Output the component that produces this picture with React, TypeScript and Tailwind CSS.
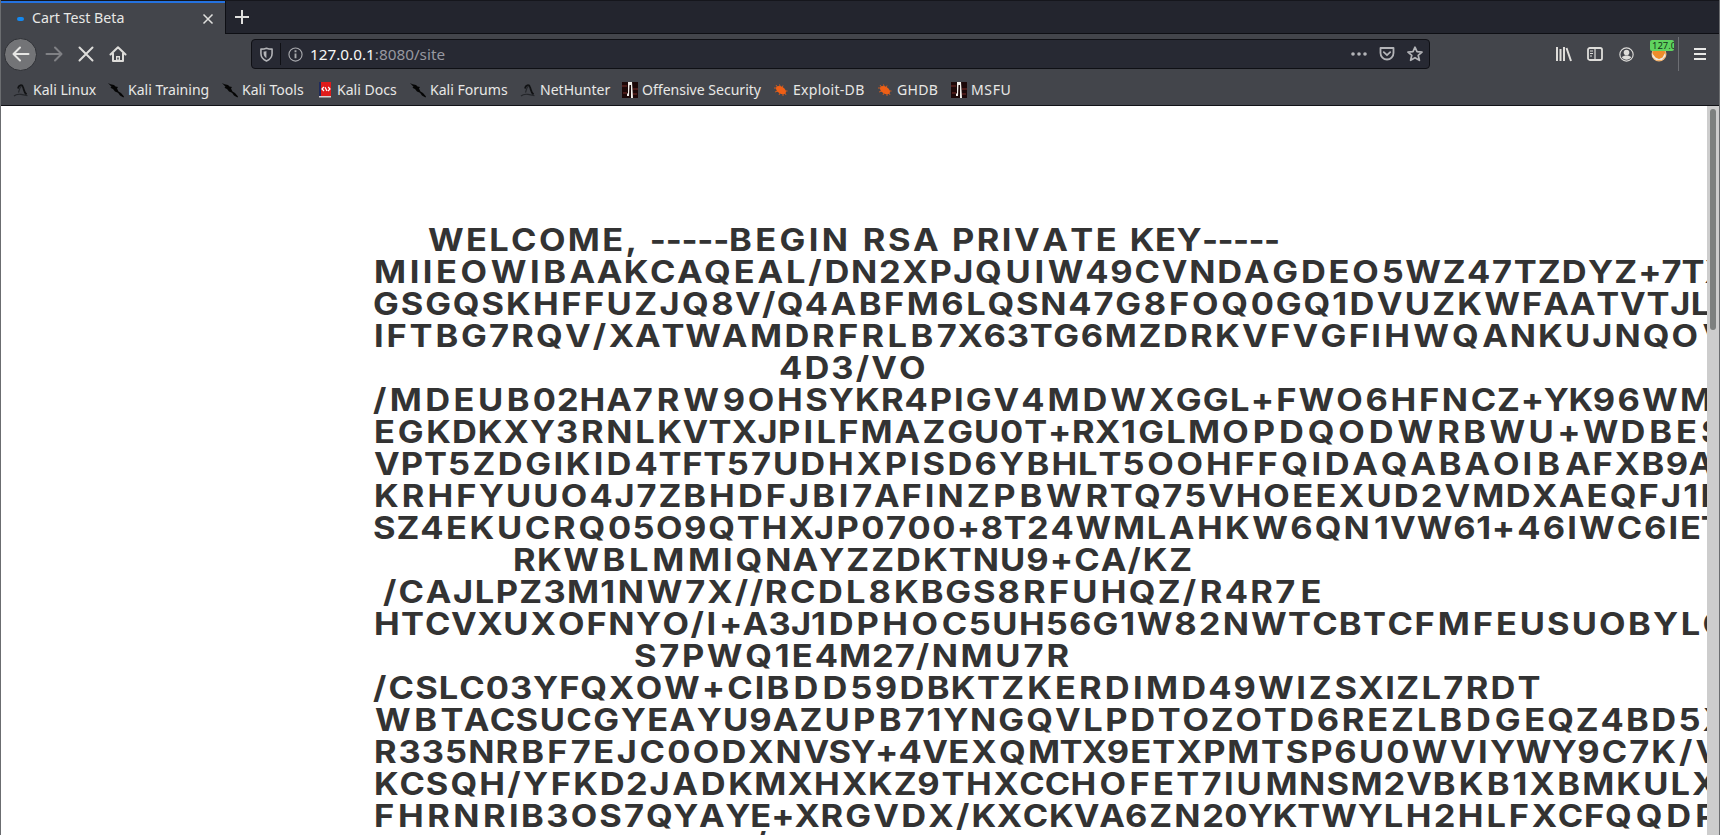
import React from "react";

type Run = [text: string, x: number];

const FACE = "700 31px Inter";
const STRETCH = 1.11;

// Each line: runs of glyphs with the x at which they begin, and the x at which the line stops.
const LINES: { runs: Run[]; end: number }[] = [
  { runs: [["WELCOME, ", 428], ["-----", 652], ["BEGIN ", 731.3], ["RSA ", 865], ["PRIVATE ", 954.3], ["KEY", 1132], ["-----", 1204.3]], end: 1279.5 },
  { runs: [["MIIEOWIB", 376.7], ["AAKCA", 570], ["QEAL/", 705.7], ["DN2XPJ", 827.3], ["QUI", 976.7], ["W49CVND", 1048.3], ["AGDEO", 1244.3], ["5WZ47", 1383.3], ["TZDYZ", 1515.3], ["+7T", 1641], ["X", 1705]], end: 1732 },
  { runs: [["GSGQS", 375], ["KHFFUZJQ", 509], ["8V/Q", 713.3], ["4ABFM6", 806.7], ["LQSN47", 969.3], ["G8FOQ", 1117.3], ["0GQ", 1252.7], ["1DVU", 1334.3], ["ZKW", 1434.3], ["FAATV", 1525.3], ["TJ", 1648.7], ["L", 1694]], end: 1714 },
  { runs: [["IFTB", 376.7], ["G7RQV", 462.7], ["/", 593.3], ["XATW", 609.3], ["AMD", 722.3], ["RFRLB", 814.7], ["7X63T", 938.3], ["G6MZ", 1055], ["DRKV", 1165.7], ["FVGF", 1272.7], ["IHWQ", 1374], ["ANK", 1482.7], ["UJNQ", 1567.7], ["O", 1673.3], ["V", 1703]], end: 1727 },
  { runs: [["4D3/VO", 781]], end: 928.5 },
  { runs: [["/", 373.3], ["MDEUB", 392.3], ["02HA", 534.3], ["7RW", 634.3], ["9OH", 724.3], ["SYKR", 806.7], ["4PIGV", 906], ["4MDW", 1022.7], ["XGGL", 1149.3], ["+FW", 1253.3], ["O6HFN", 1337.7], ["CZ", 1472.3], ["+YK", 1523.3], ["96W", 1594.3], ["M", 1682.7]], end: 1714 },
  { runs: [["EG", 376.7], ["KDKXY", 429], ["3RNL", 557.7], ["KVTXJ", 660], ["PI", 780.7], ["LFMAZ", 819.3], ["GU0T", 949], ["+RX", 1050.7], ["1GLM", 1122.7], ["OPDQ", 1224], ["ODW", 1340], ["RBWU", 1440], ["+W", 1560], ["DBE", 1623.3], ["S", 1702.7]], end: 1724 },
  { runs: [["VPT", 374.3], ["5ZDGI", 449.3], ["KID", 568.3], ["4TFT", 636], ["57U", 728.3], ["DHXPI", 802.7], ["S", 924], ["D6YB", 950], ["HLT", 1054], ["5OOHF", 1124], ["FQI", 1260], ["DAQ", 1327.3], ["ABAO", 1410.7], ["IB", 1525], ["AFXB", 1565.7], ["9", 1667.3], ["A", 1689]], end: 1715 },
  { runs: [["KRH", 376.7], ["FYUUO", 459], ["4J7Z", 591], ["BHDFJ", 686], ["BI", 815], ["7A", 854], ["FIN", 904.3], ["ZPBW", 968.3], ["RTQ", 1088.3], ["75VH", 1164], ["OEEX", 1265], ["UD2V", 1369.3], ["MDX", 1475], ["AEQFJ", 1559.3], ["1", 1685], ["E", 1703.3]], end: 1726 },
  { runs: [["SZ", 375], ["4EK", 422.3], ["UCRQ", 500], ["05O", 610], ["9QTH", 686], ["X", 790], ["JP", 816], ["0700", 863.3], ["+8T", 960], ["24WM", 1029], ["LAHK", 1150], ["W6Q", 1253.3], ["N", 1346.7], ["1V", 1376], ["W61", 1417.7], ["+46I", 1495], ["WC6I", 1580], ["E", 1683.3], ["T", 1703]], end: 1725 },
  { runs: [["RK", 516], ["WBLM", 564], ["MIQ", 691], ["NA", 768.3], ["YZZD", 820], ["KTNU", 926], ["9+CA", 1028.3], ["/KZ", 1128.3]], end: 1195 },
  { runs: [["/", 383.3], ["CAJL", 400], ["PZ3M", 498.3], ["1NW", 601.7], ["7X", 686.7], ["//", 735], ["RC", 767.3], ["DL8", 820.7], ["KBGS", 896.7], ["8RFU", 999], ["HQZ", 1103.3], ["/", 1183.3], ["R4", 1202.3], ["R", 1253], ["7", 1276.7], ["E", 1303.3]], end: 1323 },
  { runs: [["HT", 376.7], ["CVX", 426.7], ["UXO", 506], ["FNYO", 589.3], ["/I", 691], ["+A3", 721.7], ["J", 792.7], ["1D", 812.7], ["PHO", 859.3], ["C5U", 943.3], ["H56", 1021.7], ["G1W", 1094.3], ["82N", 1176], ["WTC", 1251.7], ["BTC", 1341.7], ["FMFE", 1417.3], ["USU", 1522.7], ["OBYL", 1600.7], ["C", 1704.3]], end: 1728 },
  { runs: [["S7", 636], ["PWQ", 685], ["1E", 776.7], ["4M2", 816.7], ["7", 896.7], ["/NM", 916.7], ["U7R", 998.3]], end: 1073 },
  { runs: [["/", 373.3], ["CSLC", 390], ["03YF", 487.3], ["QXO", 581.7], ["W", 664.3], ["+CI", 704.3], ["BD", 769], ["D", 825], ["59D", 851.7], ["BKT", 929.3], ["ZKER", 1002.7], ["DIM", 1107.3], ["D49", 1184], ["WIZ", 1258.3], ["SXI", 1336], ["ZL7", 1397.7], ["RDT", 1468.3]], end: 1543 },
  { runs: [["WB", 375], ["TAC", 441.7], ["SUCG", 516.7], ["YEA", 620.7], ["YU9A", 696.7], ["Z", 800.7], ["UPB", 826.7], ["71Y", 906], ["NGQ", 972.3], ["VLPD", 1055], ["TOZ", 1159], ["O", 1236.7], ["TD6", 1265], ["REZL", 1344], ["BDG", 1441.7], ["EQZ", 1526.7], ["4BD5", 1601.7], ["X", 1703]], end: 1728 },
  { runs: [["R", 376.7], ["335N", 400], ["RBF", 498.3], ["7EJ", 572.3], ["C0O", 641], ["DXN", 724.3], ["VSY", 804], ["+4V", 877.7], ["EXQ", 951], ["MTX", 1030.7], ["9ETX", 1108.3], ["PM", 1206], ["TSP", 1262.7], ["6U0", 1336], ["WVI", 1412.3], ["YWY", 1490.7], ["9C7", 1579], ["K/", 1654], ["V", 1696]], end: 1720 },
  { runs: [["KC", 376.7], ["SQH", 427.3], ["/YF", 507.7], ["KD2", 576], ["JAD", 651], ["KMX", 731], ["H", 816.7], ["XKZ", 842.3], ["9TH", 919], ["XCC", 994], ["HOF", 1073.3], ["ET7", 1155.7], ["I", 1226.7], ["U", 1239.3], ["MNS", 1268.3], ["M2V", 1353.3], ["BKB", 1435.7], ["1XB", 1514.3], ["MKU", 1585], ["L", 1673.3], ["X", 1692.7]], end: 1718 },
  { runs: [["FH", 376.7], ["RNR", 430], ["IB3", 511.7], ["OS7", 572.3], ["QYA", 647.7], ["YE+", 725.7], ["X", 795], ["RGV", 823.3], ["DX/", 904], ["KXC", 974.3], ["KVA", 1051.7], ["6ZN", 1126.7], ["20", 1204], ["YK", 1248.3], ["TWY", 1299], ["LH2", 1386.7], ["HLF", 1460.7], ["XCF", 1532.3], ["QQD", 1606.7], ["P", 1698]], end: 1722 },
];

const ctx = document.createElement("canvas").getContext("2d")!;

// Bearings and widths of the heading face, so each run's ink can begin at its x.
function bearing(ch: string) {
  ctx.font = FACE;
  return -ctx.measureText(ch).actualBoundingBoxLeft * STRETCH;
}
function natural(text: string) {
  ctx.font = FACE;
  return [...text].reduce((sum, ch) => sum + ctx.measureText(ch).width, 0);
}

function KeyLine({ runs, end }: { runs: Run[]; end: number }) {
  const starts = runs.map(([t, x]) => x - bearing(t[0]));
  return (
    <div
      className="flex h-8 origin-left scale-x-[1.11] whitespace-pre [font-kerning:none]"
      style={{ marginLeft: starts[0] - 1.4 }}
    >
      {runs.map(([text], i) => {
        const width = ((starts[i + 1] ?? end) - starts[i]) / STRETCH;
        const letterSpacing = (width - natural(text)) / text.length;
        return (
          <span key={i} className="shrink-0" style={{ width, letterSpacing }}>
            {text}
          </span>
        );
      })}
    </div>
  );
}

const Dragon = () => (
  <svg viewBox="0 0 16 16" className="h-4 w-4 shrink-0">
    <path d="M0 1l2.500 1.200L6 3l1.500 1.500L10 5l-1 1.500 1.500 3L13 11l3 3.500-.5 1L12 13.500l-2-2.800L7 9.500 5 7 2.500 5.800l1-1z" fill="#050505" />
  </svg>
);
const Hunter = () => (
  <svg viewBox="0 0 16 16" className="h-4 w-4 shrink-0">
    <path d="M5 6.500C5.500 3 9 2 10 5c1 2.500.8 5 3.500 7.500" fill="none" stroke="#111214" strokeWidth="1.800" />
    <path d="M8.500 4C6 6 6.500 8 5.500 10.500M1 14c2-1.800 4-2 7-1.600s4 .4 6.500 1.400" fill="none" stroke="#24262a" strokeWidth="1.200" />
  </svg>
);
const Docs = () => (
  <svg viewBox="0 0 16 16" className="h-4 w-4 shrink-0">
    <path d="M2 0h2v14H2z" fill="#202c5c" />
    <path d="M4 0h10v14H4z" fill="#e01b1b" />
    <path d="M2 14h12v1.500H2z" fill="#d8d0d0" />
    <path d="M6.800 5L5 7l2 2M11.200 5L13 7l-2 2M8 5.200l2 3.800" fill="none" stroke="#fff" strokeWidth="1.200" />
  </svg>
);
const OffSec = () => (
  <svg viewBox="0 0 16 16" className="h-4 w-4 shrink-0">
    <path d="M0 0h16v16H0z" fill="#1c0808" />
    <path d="M0 3h5v2H0zM11 6h5v2h-5zM1 10h4v2H1zM11 11h4v2h-4z" fill="#4a1a18" />
    <path d="M6 0h4l1 16H9V3H7.500L7 14H5V12l1-1z" fill="#f2eeea" />
  </svg>
);
const Bug = () => (
  <svg viewBox="0 0 16 16" className="h-4 w-4 shrink-0">
    <ellipse cx="8" cy="8.200" rx="5.500" ry="3.400" transform="rotate(32 8 8.200)" fill="#ee5f16" />
    <path d="M3 3l2 3M6.500 2.500l1 3M10 3.500L9 6M1 6h3M2 10l3-1M6 13l1-2M10 14l0-3M13 13l-1-2M14.500 9H12" stroke="#ee5f16" strokeWidth=".8" />
  </svg>
);

const BOOKMARKS = [
  { icon: Hunter, label: "Kali Linux", w: "w-[95px]" },
  { icon: Dragon, label: "Kali Training", w: "w-[114px]" },
  { icon: Dragon, label: "Kali Tools", w: "w-[95px]" },
  { icon: Docs, label: "Kali Docs", w: "w-[93px]" },
  { icon: Dragon, label: "Kali Forums", w: "w-[110px]" },
  { icon: Hunter, label: "NetHunter", w: "w-[102px]" },
  { icon: OffSec, label: "Offensive Security", w: "w-[151px]" },
  { icon: Bug, label: "Exploit-DB", w: "w-[104px] tracking-[0.3px]" },
  { icon: Bug, label: "GHDB", w: "w-[74px] tracking-[0.3px]" },
  { icon: OffSec, label: "MSFU", w: "w-[62px] tracking-[0.6px]" },
];

export default function App() {
  return (
    <div className="flex h-[835px] w-[1720px] flex-col overflow-hidden border-x border-[#6b6d70] bg-white font-['Noto_Sans',sans-serif] text-[14px] text-[#e8e8e6]">
      <header className="flex h-[34px] shrink-0 border-t border-[#15161c] bg-[#23252e]">
        <div className="flex w-[224px] items-center border-t-2 border-[#2472e0] bg-[#43454b] pl-[16px] pr-[11px]">
          <span className="h-[4px] w-[7px] shrink-0 rounded-full bg-[#1488f0]" />
          <span className="ml-[8px] grow whitespace-nowrap pb-[2px] text-[14.200px]">Cart Test Beta</span>
          <svg viewBox="0 0 12 12" className="h-3 w-3 shrink-0" stroke="#e0e0de" strokeWidth="1.500">
            <path d="M1.500 1.500l9 9M10.500 1.500l-9 9" />
          </svg>
        </div>
        <div className="flex grow items-start border-b border-l border-[#0e0f14] pl-[8px] pt-[8px]">
          <svg viewBox="0 0 16 16" className="h-4 w-4" stroke="#e0e0de" strokeWidth="2">
            <path d="M8 1v14M1 8h14" />
          </svg>
        </div>
      </header>

      <nav className="flex h-[40px] shrink-0 items-center bg-[#43454b] pl-[3px] pr-[12px]">
        <span className="flex h-[33px] w-[33px] shrink-0 items-center justify-center rounded-full border border-[#2f3136] bg-[#737477]">
          <svg viewBox="0 0 18 16" className="h-4 w-[18px]" fill="none" stroke="#e6e6e4" strokeWidth="2" strokeLinecap="round" strokeLinejoin="round">
            <path d="M8 1.500L1.500 8 8 14.500M2 8h14.500" />
          </svg>
        </span>
        <svg viewBox="0 0 18 16" className="ml-[8px] h-4 w-[18px] shrink-0" fill="none" stroke="#808185" strokeWidth="2" strokeLinecap="round" strokeLinejoin="round">
          <path d="M10 1.500L16.500 8 10 14.500M16 8H1.500" />
        </svg>
        <svg viewBox="0 0 16 16" className="ml-[15px] h-4 w-4 shrink-0" stroke="#deddda" strokeWidth="2" strokeLinecap="round">
          <path d="M1.500 1.500l13 13M14.500 1.500l-13 13" />
        </svg>
        <svg viewBox="0 0 18 16" className="ml-[15px] h-4 w-[18px] shrink-0" fill="none" stroke="#deddda" strokeWidth="2" strokeLinecap="round" strokeLinejoin="round">
          <path d="M1.500 8.500L9 1.200l7.500 7.300M4 7.500V15h10V7.500" />
          <path d="M9 15v-5" strokeWidth="4" strokeLinecap="butt" />
          <path d="M9 13.500v-2" stroke="#43454b" strokeWidth="1.500" strokeLinecap="butt" />
        </svg>

        <div className="ml-[124px] flex h-[30px] w-[1179px] shrink-0 items-center rounded-[4px] border border-[#0f1015] bg-[#272933] pl-[8px] pr-[6px]">
          <svg viewBox="0 0 14 16" className="h-[15px] w-[13px]" fill="none" stroke="#b3b4b8" strokeWidth="1.700">
            <path d="M7 1.200c2 .9 4 1 6 1V7c0 4-2.500 6.500-6 8-3.500-1.500-6-4-6-8V2.200c2 0 4-.1 6-1z" strokeLinejoin="round" />
            <path d="M6.900 4.200c-1 .5-2 .6-3 .6V7c0 2.500 1.400 4 3 5z" fill="#b3b4b8" stroke="none" />
          </svg>
          <span className="ml-[7px] h-[22px] w-px bg-[#0f1015]" />
          <svg viewBox="0 0 16 16" className="ml-[7px] h-[15px] w-[15px]" fill="none" stroke="#a9aaae" strokeWidth="1.200">
            <circle cx="8" cy="8" r="7" />
            <path d="M8 3.500v2M8 7v5" strokeWidth="2" />
          </svg>
          <span className="ml-[7px] grow text-[15.300px] text-[#9798a0]">
            <span className="text-[#f7f7f5]">127.0.0.1</span>:8080/site
          </span>
          <svg viewBox="0 0 16 4" className="h-1 w-4" fill="#b3b4b8">
            <circle cx="2" cy="2" r="1.800" />
            <circle cx="8" cy="2" r="1.800" />
            <circle cx="14" cy="2" r="1.800" />
          </svg>
          <svg viewBox="0 0 16 14" className="ml-[12px] h-[14px] w-4" fill="none" stroke="#b3b4b8" strokeWidth="1.800" strokeLinecap="round" strokeLinejoin="round">
            <path d="M1.500 1h13v5a6.500 6.500 0 0 1-13 0z" />
            <path d="M4.800 5.200L8 8.200l3.200-3" />
          </svg>
          <svg viewBox="0 0 16 16" className="ml-[12px] h-4 w-4" fill="none" stroke="#b3b4b8" strokeWidth="1.700" strokeLinejoin="round">
            <path d="M8 1.200l2 4.500 5 .4-3.800 3.200 1.200 5L8 11.700l-4.400 2.600 1.200-5L1 6.100l5-.4z" />
          </svg>
        </div>

        <svg viewBox="0 0 16 16" className="ml-[126px] h-4 w-4 shrink-0" stroke="#deddda" strokeWidth="2">
          <path d="M1 1v14M4.500 3v12M8 1v14M10.500 2L15 15" />
        </svg>
        <svg viewBox="0 0 16 14" className="ml-[15px] h-[14px] w-4 shrink-0" fill="none" stroke="#deddda" strokeWidth="1.800">
          <rect x="1" y="1" width="14" height="12" rx="1.800" />
          <path d="M8 1v12" strokeWidth="1.200" />
          <path d="M3 4h3M3 6.500h3M3 9h2" strokeWidth="1.100" />
        </svg>
        <svg viewBox="0 0 16 16" className="ml-[16px] h-[15px] w-[15px] shrink-0">
          <circle cx="8" cy="8" r="7.100" fill="none" stroke="#deddda" strokeWidth="1.200" />
          <circle cx="8" cy="5.800" r="3" fill="#deddda" />
          <path d="M3 11c1-1.600 3-2 5-2s4 .4 5 2c-1 1.600-3 2.600-5 2.600S4 12.600 3 11z" fill="#deddda" />
        </svg>
        <div className="relative ml-[16px] h-[22px] w-[28px] shrink-0">
          <svg viewBox="0 0 16 16" className="ml-px mt-[3px] h-4 w-4">
            <circle cx="8" cy="8" r="7.500" fill="#f3b878" />
            <circle cx="8" cy="8" r="6.300" fill="#ef8d2b" />
            <path d="M1 7l3.500 4.500L8 13l3.500-1.500L14 7l.5 3-3.500 4H5L1.500 11z" fill="#efe8df" />
          </svg>
          <span className="absolute left-0 top-[-3px] h-[11px] w-[24px] overflow-hidden rounded-[2px] bg-[#5fd35f] pl-[2px] text-[9.500px] leading-[11px] text-[#15331a]">
            127.0
          </span>
        </div>
        <span className="h-[34px] w-px shrink-0 bg-[#6d6f74]" />
        <svg viewBox="0 0 12 12" className="ml-[15px] h-3 w-3 shrink-0" stroke="#e8e8e6" strokeWidth="2">
          <path d="M0 1h12M0 6h12M0 11h12" />
        </svg>
      </nav>

      <div className="flex h-[32px] shrink-0 items-center border-b border-[#111217] bg-[#43454b] pl-[12px] pt-px">
        {BOOKMARKS.map(({ icon: Icon, label, w }) => (
          <span key={label} className={`flex shrink-0 items-center gap-1 whitespace-nowrap text-[14.050px] ${w}`}>
            <Icon />
            {label}
          </span>
        ))}
      </div>

      <div className="flex min-h-0 grow">
        <main className="w-[1706px] shrink-0 overflow-hidden pt-[118px] font-['Inter',sans-serif] text-[31px] font-bold leading-8 text-[#333333]">
          {LINES.map((line, i) => (
            <KeyLine key={i} {...line} />
          ))}
          <div className="-mt-[4px] pl-[753px]">/</div>
        </main>
        <div className="w-[12px] shrink-0 bg-[#cdcdcd] pl-[3px] pt-[3px]">
          <div className="h-[221px] w-[6px] rounded-full bg-[#7d807f]" />
        </div>
      </div>
    </div>
  );
}
